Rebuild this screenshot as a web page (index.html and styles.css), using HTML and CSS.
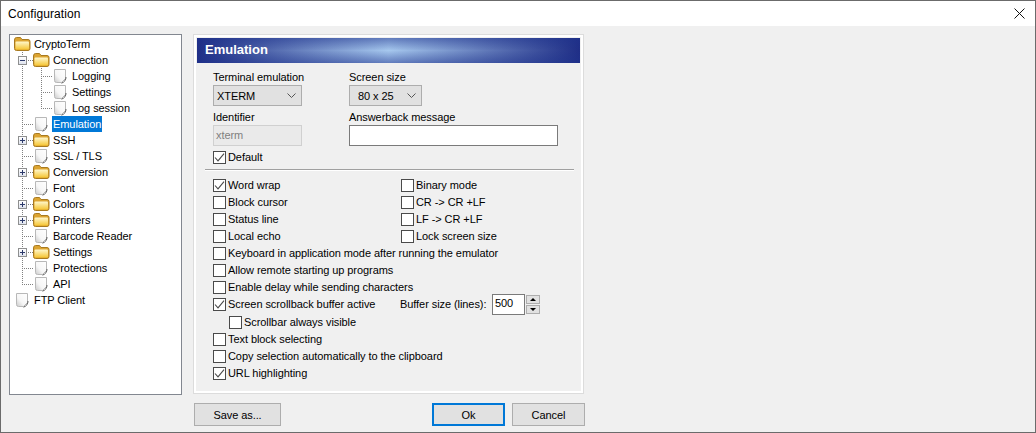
FILE: index.html
```html
<!DOCTYPE html>
<html lang="en">
<head>
<meta charset="utf-8">
<title>Configuration</title>
<link rel="stylesheet" href="styles.css">
</head>
<body>
<svg class="defs" width="0" height="0" aria-hidden="true">
  <defs>
    <linearGradient id="fg" x1="0" y1="0" x2="0" y2="1"><stop offset="0" stop-color="#fff8cc"/><stop offset="1" stop-color="#f5c535"/></linearGradient>
    <linearGradient id="dg" x1="1" y1="0" x2="0" y2="1"><stop offset="0" stop-color="#ffffff"/><stop offset=".6" stop-color="#f6f6f6"/><stop offset="1" stop-color="#c8c8c8"/></linearGradient>
    <symbol id="folder" viewBox="0 0 19 16">
      <path d="M.5 4 Q.5 1.5 2.5 1.5 H6.5 L8 3.5 H14 Q16 3.5 16 5.5 V12.5 Q16 14.5 14 14.5 H2.5 Q.5 14.5 .5 12.5 Z" fill="#dca431" stroke="#a87a20"/>
      <path d="M1.5 6.5 Q1.5 5.5 2.5 5.5 H14 Q15 5.5 15 6.5 V12.5 Q15 13.5 14 13.5 H2.5 Q1.5 13.5 1.5 12.5 Z" fill="url(#fg)"/>
    </symbol>
    <symbol id="doc" viewBox="0 0 19 16">
      <path d="M2.5 1.5 H13.5 V10.5 L9.5 14.5 H4.5 Q2.5 14.5 2.5 12.5 Z" fill="url(#dg)" stroke="#b8b8b8"/>
      <path d="M14 9 Q14 13.5 9.5 15.2" fill="none" stroke="#5e5e5e"/>
    </symbol>
    <symbol id="check" viewBox="0 0 11 11">
      <path d="M1 5.5 L4 8.8 L10 1.6" fill="none" stroke="#4a4a4a" stroke-width="1.1"/>
    </symbol>
  </defs>
</svg>
<div class="window">
  <header class="titlebar">
    <span class="title">Configuration</span>
    <svg class="close" width="11" height="11" viewBox="0 0 11 11"><path d="M.5 .5 L10.5 10.5 M10.5 .5 L.5 10.5" stroke="#111" stroke-width="1" fill="none"/></svg>
  </header>
  <div class="content">
    <div class="top">
      <nav class="tree">
        <div class="row"><svg class="ico"><use href="#folder"/></svg><span class="lbl">CryptoTerm</span></div>
        <div class="row"><span class="cell elbow exp"><span class="box"><span class="minus"></span></span></span><svg class="ico"><use href="#folder"/></svg><span class="lbl">Connection</span></div>
        <div class="row"><span class="cell trunk"></span><span class="cell elbow"></span><svg class="ico"><use href="#doc"/></svg><span class="lbl">Logging</span></div>
        <div class="row"><span class="cell trunk"></span><span class="cell elbow"></span><svg class="ico"><use href="#doc"/></svg><span class="lbl">Settings</span></div>
        <div class="row"><span class="cell trunk"></span><span class="cell elbow last"></span><svg class="ico"><use href="#doc"/></svg><span class="lbl">Log session</span></div>
        <div class="row"><span class="cell elbow"></span><svg class="ico"><use href="#doc"/></svg><span class="lbl sel">Emulation</span></div>
        <div class="row"><span class="cell elbow exp"><span class="box"><span class="minus"></span><span class="vert"></span></span></span><svg class="ico"><use href="#folder"/></svg><span class="lbl">SSH</span></div>
        <div class="row"><span class="cell elbow"></span><svg class="ico"><use href="#doc"/></svg><span class="lbl">SSL / TLS</span></div>
        <div class="row"><span class="cell elbow exp"><span class="box"><span class="minus"></span><span class="vert"></span></span></span><svg class="ico"><use href="#folder"/></svg><span class="lbl">Conversion</span></div>
        <div class="row"><span class="cell elbow"></span><svg class="ico"><use href="#doc"/></svg><span class="lbl">Font</span></div>
        <div class="row"><span class="cell elbow exp"><span class="box"><span class="minus"></span><span class="vert"></span></span></span><svg class="ico"><use href="#folder"/></svg><span class="lbl">Colors</span></div>
        <div class="row"><span class="cell elbow exp"><span class="box"><span class="minus"></span><span class="vert"></span></span></span><svg class="ico"><use href="#folder"/></svg><span class="lbl">Printers</span></div>
        <div class="row"><span class="cell elbow"></span><svg class="ico"><use href="#doc"/></svg><span class="lbl">Barcode Reader</span></div>
        <div class="row"><span class="cell elbow exp"><span class="box"><span class="minus"></span><span class="vert"></span></span></span><svg class="ico"><use href="#folder"/></svg><span class="lbl">Settings</span></div>
        <div class="row"><span class="cell elbow"></span><svg class="ico"><use href="#doc"/></svg><span class="lbl">Protections</span></div>
        <div class="row"><span class="cell elbow last"></span><svg class="ico"><use href="#doc"/></svg><span class="lbl">API</span></div>
        <div class="row"><svg class="ico"><use href="#doc"/></svg><span class="lbl">FTP Client</span></div>
      </nav>
      <section class="panel">
        <h1 class="panel-head">Emulation</h1>
        <div class="form">
          <div class="fields">
            <div class="field f1">
              <span class="flabel">Terminal emulation</span>
              <span class="select s1">XTERM<svg class="chev" width="9" height="5" viewBox="0 0 9 5"><path d="M.5 .5 L4.5 4.5 L8.5 .5" fill="none" stroke="#555"/></svg></span>
            </div>
            <div class="field f2">
              <span class="flabel">Screen size</span>
              <span class="select s2">80 x 25<svg class="chev" width="9" height="5" viewBox="0 0 9 5"><path d="M.5 .5 L4.5 4.5 L8.5 .5" fill="none" stroke="#555"/></svg></span>
            </div>
            <div class="field f1 gap">
              <span class="flabel">Identifier</span>
              <span class="input disabled">xterm</span>
            </div>
            <div class="field f2 gap">
              <span class="flabel">Answerback message</span>
              <span class="input answer"></span>
            </div>
          </div>
          <label class="opt default"><span class="cb"><svg width="11" height="11"><use href="#check"/></svg></span>Default</label>
          <div class="sep"></div>
          <div class="cols">
            <label class="opt"><span class="cb"><svg width="11" height="11"><use href="#check"/></svg></span>Word wrap</label>
            <label class="opt"><span class="cb"></span>Binary mode</label>
            <label class="opt"><span class="cb"></span>Block cursor</label>
            <label class="opt"><span class="cb"></span>CR -&gt; CR +LF</label>
            <label class="opt"><span class="cb"></span>Status line</label>
            <label class="opt"><span class="cb"></span>LF -&gt; CR +LF</label>
            <label class="opt"><span class="cb"></span>Local echo</label>
            <label class="opt"><span class="cb"></span>Lock screen size</label>
          </div>
          <label class="opt"><span class="cb"></span>Keyboard in application mode after running the emulator</label>
          <label class="opt"><span class="cb"></span>Allow remote starting up programs</label>
          <label class="opt"><span class="cb"></span>Enable delay while sending characters</label>
          <div class="buffer">
            <label class="opt buf-left"><span class="cb"><svg width="11" height="11"><use href="#check"/></svg></span>Screen scrollback buffer active</label>
            <span class="buf-label">Buffer size (lines):</span>
            <span class="input buf-input">500</span>
            <span class="spin">
              <span class="spin-btn"><span class="up"></span></span>
              <span class="spin-btn"><span class="down"></span></span>
            </span>
          </div>
          <label class="opt sub"><span class="cb"></span>Scrollbar always visible</label>
          <label class="opt"><span class="cb"></span>Text block selecting</label>
          <label class="opt"><span class="cb"></span>Copy selection automatically to the clipboard</label>
          <label class="opt"><span class="cb"><svg width="11" height="11"><use href="#check"/></svg></span>URL highlighting</label>
        </div>
      </section>
    </div>
    <footer class="footer">
      <button class="btn save">Save as...</button>
      <button class="btn ok">Ok</button>
      <button class="btn">Cancel</button>
    </footer>
  </div>
</div>
</body>
</html>
```
FILE: styles.css
```css
* { box-sizing: border-box; }
html, body { margin: 0; padding: 0; }
body {
  width: 1036px;
  height: 433px;
  overflow: hidden;
  font-family: "Liberation Sans", Arial, sans-serif;
  font-size: 11px;
  letter-spacing: -0.07px;
  color: #000;
  background: #f0f0f0;
}
.defs { display: block; height: 0; }
.window {
  width: 1036px;
  height: 433px;
  border: 1px solid #6b6b6b;
  display: flex;
  flex-direction: column;
  background: #f0f0f0;
}
.titlebar {
  height: 25px;
  background: #fff;
  display: flex;
  align-items: center;
  justify-content: space-between;
  padding: 0 10px 0 7px;
  flex: none;
}
.title { font-size: 12px; letter-spacing: .08px; }
.content { flex: 1; padding: 8px 0 0 8px; display: flex; flex-direction: column; }
.top { display: flex; align-items: flex-start; gap: 11px; }

/* tree */
.tree {
  width: 173px;
  height: 361px;
  background: #fff;
  border: 1px solid #828790;
  padding: 1px 0 0 4px;
}
.row { display: flex; height: 16px; align-items: center; }
.cell { width: 19px; height: 16px; flex: none; position: relative; }
.ico { width: 19px; height: 16px; flex: none; }
.lbl { padding: 0 1px; height: 16px; line-height: 16px; white-space: nowrap; }
.sel { background: #0078d7; color: #fff; }
.trunk {
  background: repeating-linear-gradient(to bottom, #808080 0 1px, transparent 1px 2px) 8px 0 / 1px 100% no-repeat;
}
.elbow {
  background:
    repeating-linear-gradient(to bottom, #808080 0 1px, transparent 1px 2px) 8px 0 / 1px 100% no-repeat,
    repeating-linear-gradient(to right, #808080 0 1px, transparent 1px 2px) 8px 8px / 11px 1px no-repeat;
}
.elbow.last {
  background:
    repeating-linear-gradient(to bottom, #808080 0 1px, transparent 1px 2px) 8px 0 / 1px 9px no-repeat,
    repeating-linear-gradient(to right, #808080 0 1px, transparent 1px 2px) 8px 8px / 11px 1px no-repeat;
}
.box {
  position: absolute;
  left: 4px;
  top: 4px;
  width: 9px;
  height: 9px;
  border: 1px solid #8e8f8f;
  background: linear-gradient(#fff, #dfe3ee);
}
.minus { position: absolute; left: 1px; top: 3px; width: 5px; height: 1px; background: #2c3a6b; }
.vert { position: absolute; left: 3px; top: 1px; width: 1px; height: 5px; background: #2c3a6b; }

/* panel */
.panel {
  width: 391px;
  height: 360px;
  border: 1px solid #dcdcdc;
  outline: 2px solid #fff;
  outline-offset: -3px;
  padding: 3px 3px 0;
  background: #f0f0f0;
}
.panel-head {
  margin: 0;
  height: 25px;
  line-height: 24px;
  padding-left: 8px;
  font-size: 13px;
  font-weight: 700;
  letter-spacing: 0;
  color: #fff;
  background:
    linear-gradient(to bottom, rgba(30,50,140,.5), rgba(30,50,140,0) 50%, rgba(30,50,140,.5)),
    linear-gradient(to right, #1f2e86 0%, #a6c8ee 50%, #1f2e86 100%);
}
.form { padding: 7px 0 0 16px; }
.fields { display: grid; grid-template-columns: 136px 1fr; }
.field { display: flex; flex-direction: column; align-items: flex-start; }
.gap { margin-top: 4px; }
.flabel { height: 15px; line-height: 15px; }
.select {
  height: 21px;
  border: 1px solid #adadad;
  background: #e1e1e1;
  display: flex;
  align-items: center;
  justify-content: space-between;
  padding: 0 5px 0 3px;
}
.s1 { width: 89px; }
.s2 { width: 73px; padding-left: 8px; }
.input {
  height: 21px;
  line-height: 19px;
  border: 1px solid #7a7a7a;
  background: #fff;
  padding-left: 2px;
  display: block;
}
.disabled { width: 89px; background: #eaeaea; border-color: #d0d0d0; color: #808080; }
.answer { width: 209px; }
.opt { display: flex; align-items: center; height: 17px; padding-bottom: 2px; gap: 2px; white-space: nowrap; }
.default { height: 14px; margin-top: 4px; padding-bottom: 0; }
.cb {
  width: 13px;
  height: 13px;
  flex: none;
  margin-top: 2px;
  border: 1px solid #4a4a4a;
  background: #fff;
  display: flex;
}
.default .cb { margin-top: 0; }
.sep {
  height: 2px;
  width: 369px;
  margin: 5px 0 6px -8px;
  border-top: 1px solid #a0a0a0;
  border-bottom: 1px solid #fff;
}
.cols { display: grid; grid-template-columns: 188px 1fr; }
.buffer { display: flex; align-items: center; height: 17px; }
.buf-left { width: 187px; flex: none; }
.buf-label { width: 92px; flex: none; white-space: nowrap; padding-bottom: 2px; }
.buf-input { width: 33px; flex: none; border-color: #7a7a7a; line-height: 17px; }
.spin { display: flex; flex-direction: column; gap: 1px; margin-left: 1px; }
.spin-btn {
  width: 14px;
  height: 9px;
  border: 1px solid #adadad;
  background: #e1e1e1;
  display: flex;
  align-items: center;
  justify-content: center;
}
.up { border: 3px solid transparent; border-top: 0; border-bottom: 3px solid #000; }
.down { border: 3px solid transparent; border-bottom: 0; border-top: 3px solid #000; }
.sub { margin-left: 16px; margin-top: 1px; }

/* footer */
.footer { display: flex; gap: 7px; margin-top: 8px; padding-left: 185px; }
.btn {
  width: 73px;
  height: 23px;
  border: 1px solid #adadad;
  background: #e1e1e1;
  font: inherit;
  letter-spacing: inherit;
  color: #000;
  padding: 0;
}
.save { width: 87px; margin-right: 144px; }
.ok { border: 2px solid #0078d7; }
```
